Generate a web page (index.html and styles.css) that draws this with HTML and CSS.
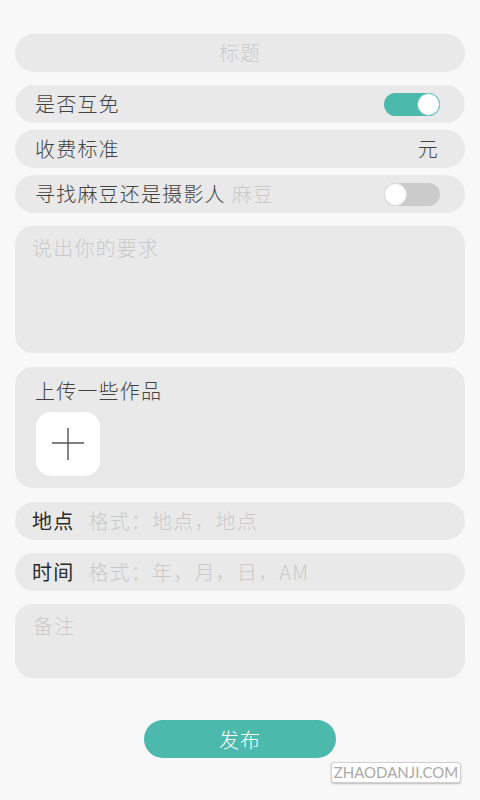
FILE: index.html
```html
<!DOCTYPE html>
<html lang="zh-CN">
<head>
<meta charset="utf-8">
<title>发布</title>
<link rel="stylesheet" href="styles.css">
</head>
<body>
<div class="page">
  <div class="row row-title"><span class="ph">标题</span></div>

  <div class="group">
    <div class="row row-item">
      <span class="label">是否互免</span>
      <span class="toggle on"><span class="knob"></span></span>
    </div>
    <div class="row row-item">
      <span class="label">收费标准</span>
      <span class="unit">元</span>
    </div>
    <div class="row row-item">
      <span class="label">寻找麻豆还是摄影人<span class="ph sub">麻豆</span></span>
      <span class="toggle off"><span class="knob"></span></span>
    </div>
  </div>

  <div class="box box-req"><span class="ph">说出你的要求</span></div>

  <div class="box box-upload">
    <div class="label">上传一些作品</div>
    <div class="add-tile">
      <svg width="34" height="34" viewBox="0 0 34 34" aria-hidden="true">
        <path d="M17 1V33M1 16H33" stroke="#555" stroke-width="1.4" fill="none"/>
      </svg>
    </div>
  </div>

  <div class="row row-field"><span class="flabel">地点</span><span class="ph">格式：地点，地点</span></div>
  <div class="row row-field gap-s"><span class="flabel">时间</span><span class="ph">格式：年，月，日，AM</span></div>

  <div class="box box-note"><span class="ph">备注</span></div>

  <div class="actions"><button class="btn">发布</button></div>
  <div class="wm-wrap"><span class="watermark">ZHAODANJI.COM</span></div>
</div>
</body>
</html>
```

FILE: styles.css
```css
* { box-sizing: border-box; }
html, body { margin: 0; padding: 0; }
body {
  background: #f8f8f8;
  font-family: "Noto Sans CJK SC", "Noto Sans", sans-serif;
  font-weight: 300;
  width: 480px;
  height: 800px;
  overflow: hidden;
}
.page {
  padding: 34px 15px 0 15px;
  display: flex;
  flex-direction: column;
}
.row {
  height: 38px;
  border-radius: 19px;
  background: #e9e9e9;
  display: flex;
  align-items: center;
  font-size: 20px;
  letter-spacing: 1.2px;
  line-height: 28px;
}
.ph { color: #c9c9c9; }
.row-title { justify-content: center; }
.group {
  margin-top: 13px;
  display: flex;
  flex-direction: column;
  gap: 7px;
}
.row-item {
  justify-content: space-between;
  padding: 0 25px 0 20px;
}
.label { color: #424242; }
.sub { margin-left: 6px; }
.unit { color: #424242; margin-right: 1px; }
.toggle {
  position: relative;
  width: 56px;
  height: 23px;
  border-radius: 12px;
}
.toggle.on { background: #4cb9ad; }
.toggle.off { background: #cbcbcb; }
.knob {
  position: absolute;
  top: 0;
  width: 23px;
  height: 23px;
  border-radius: 50%;
  background: #fff;
}
.toggle.on .knob { right: 0; border: 1px solid #6cc7bc; }
.toggle.off .knob { left: 0; border: 1px solid #dcdcdc; }

.box {
  background: #e9e9e9;
  border-radius: 18px;
  font-size: 20px;
  letter-spacing: 1.2px;
  line-height: 28px;
}
.box-req {
  margin-top: 13px;
  height: 127px;
  padding: 8px 17px;
}
.box-upload {
  margin-top: 14px;
  height: 121px;
  padding: 10px 20px 12px 21px;
}
.box-upload .label { margin-left: -1px; }
.add-tile {
  margin-top: 7px;
  width: 64px;
  height: 64px;
  border-radius: 15px;
  background: #fff;
  display: flex;
  align-items: center;
  justify-content: center;
}
.row-field {
  margin-top: 14px;
  padding-left: 17px;
}
.row-field.gap-s { margin-top: 13px; }
.flabel { color: #2a2a2a; font-weight: 400; margin-right: 14px; }
.box-note {
  margin-top: 13px;
  height: 74px;
  padding: 8px 18px;
}
.actions {
  margin-top: 42px;
  display: flex;
  justify-content: center;
}
.btn {
  width: 192px;
  height: 38px;
  border: none;
  border-radius: 19px;
  background: #4cb9ad;
  color: #fff;
  font-family: "Noto Sans CJK SC", "Noto Sans", sans-serif;
  font-weight: 300;
  font-size: 20px;
  letter-spacing: 1px;
  padding: 0;
}
.wm-wrap {
  margin-top: 4px;
  display: flex;
  justify-content: flex-end;
  padding-right: 4px;
}
.watermark {
  display: inline-block;
  height: 21px;
  width: 130px;
  line-height: 19px;
  text-align: center;
  font-family: Lato, "Liberation Sans", sans-serif;
  font-weight: 400;
  font-size: 15px;
  color: #a8a8a8;
  background: #fff;
  border: 1px solid #d0d0d0;
  border-radius: 3px;
  box-shadow: 0 1px 2px rgba(0,0,0,0.25);
}
```
